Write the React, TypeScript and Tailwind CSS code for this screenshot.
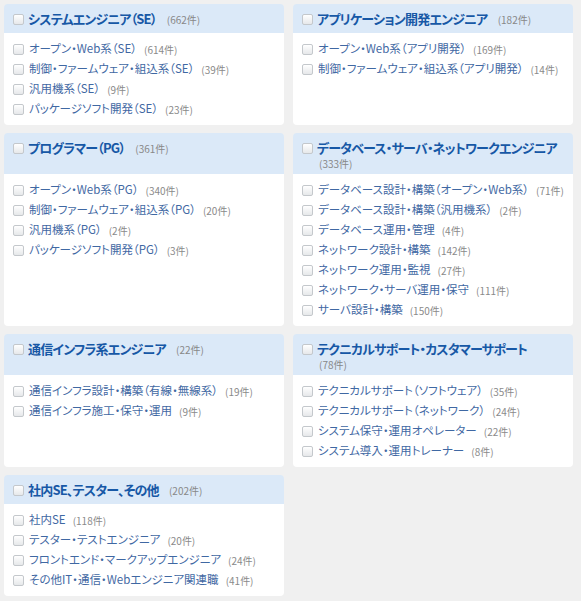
import React from "react";

type Item = { label: string; count: number };
type Group = { title: string; count: number; items: Item[] };

const rows: Group[][] = [
  [
    {
      title: "システムエンジニア（SE）",
      count: 662,
      items: [
        { label: "オープン・Web系（SE）", count: 614 },
        { label: "制御・ファームウェア・組込系（SE）", count: 39 },
        { label: "汎用機系（SE）", count: 9 },
        { label: "パッケージソフト開発（SE）", count: 23 },
      ],
    },
    {
      title: "アプリケーション開発エンジニア",
      count: 182,
      items: [
        { label: "オープン・Web系（アプリ開発）", count: 169 },
        { label: "制御・ファームウェア・組込系（アプリ開発）", count: 14 },
      ],
    },
  ],
  [
    {
      title: "プログラマー（PG）",
      count: 361,
      items: [
        { label: "オープン・Web系（PG）", count: 340 },
        { label: "制御・ファームウェア・組込系（PG）", count: 20 },
        { label: "汎用機系（PG）", count: 2 },
        { label: "パッケージソフト開発（PG）", count: 3 },
      ],
    },
    {
      title: "データベース・サーバ・ネットワークエンジニア",
      count: 333,
      items: [
        { label: "データベース設計・構築（オープン・Web系）", count: 71 },
        { label: "データベース設計・構築（汎用機系）", count: 2 },
        { label: "データベース運用・管理", count: 4 },
        { label: "ネットワーク設計・構築", count: 142 },
        { label: "ネットワーク運用・監視", count: 27 },
        { label: "ネットワーク・サーバ運用・保守", count: 111 },
        { label: "サーバ設計・構築", count: 150 },
      ],
    },
  ],
  [
    {
      title: "通信インフラ系エンジニア",
      count: 22,
      items: [
        { label: "通信インフラ設計・構築（有線・無線系）", count: 19 },
        { label: "通信インフラ施工・保守・運用", count: 9 },
      ],
    },
    {
      title: "テクニカルサポート・カスタマーサポート",
      count: 78,
      items: [
        { label: "テクニカルサポート（ソフトウェア）", count: 35 },
        { label: "テクニカルサポート（ネットワーク）", count: 24 },
        { label: "システム保守・運用オペレーター", count: 22 },
        { label: "システム導入・運用トレーナー", count: 8 },
      ],
    },
  ],
  [
    {
      title: "社内SE、テスター、その他",
      count: 202,
      items: [
        { label: "社内SE", count: 118 },
        { label: "テスター・テストエンジニア", count: 20 },
        { label: "フロントエンド・マークアップエンジニア", count: 24 },
        { label: "その他IT・通信・Webエンジニア関連職", count: 41 },
      ],
    },
  ],
];

function Box() {
  return (
    <span className="inline-block w-[11px] h-[11px] shrink-0 rounded-[2px] border border-[#c4c8cc] bg-gradient-to-b from-white to-[#e6e8ea]" />
  );
}

function Header({ group }: { group: Group }) {
  return (
    <label className="flex items-start rounded-t-[4px] bg-[#dbe9f8] pl-[9px] pr-[10px] pt-[5px] pb-[4px] cursor-pointer">
      <span className="mt-[5px] flex">
        <Box />
      </span>
      <div className="ml-[4px] text-[10px] leading-[12px] text-[#888]">
        <span className="mr-[6px] whitespace-nowrap text-[13px] leading-[20px] tracking-[-0.8px] font-bold text-[#1758a6]">
          {group.title}
        </span>{" "}
        <span className="ml-[2px] whitespace-nowrap">({group.count}件)</span>
      </div>
    </label>
  );
}

function Body({ group }: { group: Group }) {
  return (
    <div className="rounded-b-[4px] bg-white pl-[9px] pt-[6px] pb-[6px]">
      {group.items.map((item) => (
        <label key={item.label} className="flex h-[20px] items-center cursor-pointer">
          <Box />
          <span className="ml-[5px] text-[11.5px] text-[#3f68a3]">{item.label}</span>
          <span className="ml-[7px] text-[10px] text-[#8a8a8a]">({item.count}件)</span>
        </label>
      ))}
    </div>
  );
}

export default function App() {
  return (
    <div className="min-h-screen bg-[#f0f0f0] pl-[4px] pt-[4px] pb-[4px] [font-family:'Noto_Sans_CJK_JP','Noto_Sans',sans-serif] [font-feature-settings:'palt']">
      <div className="flex flex-col gap-[8px]">
        {rows.map((row, i) => (
          <div key={i} className="grid grid-cols-[280px_280px] gap-x-[9px]">
            {row.map((g) => (
              <Header key={g.title} group={g} />
            ))}
            {row.length === 1 && <div />}
            {row.map((g) => (
              <Body key={g.title} group={g} />
            ))}
            {row.length === 1 && <div />}
          </div>
        ))}
      </div>
    </div>
  );
}
